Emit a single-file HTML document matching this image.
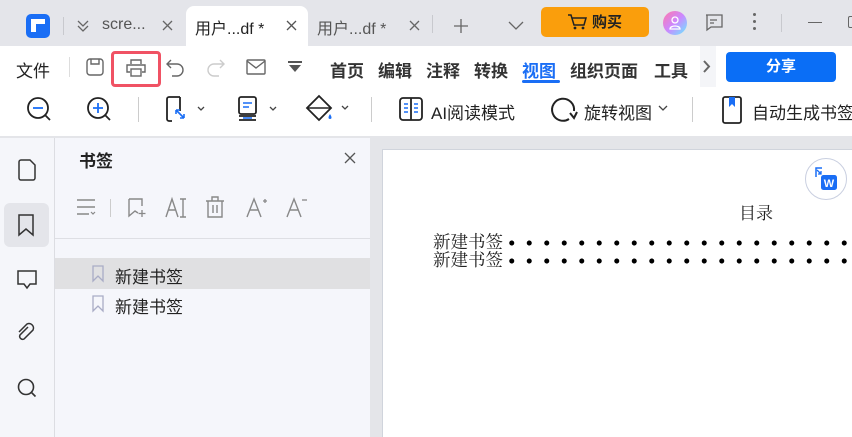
<!DOCTYPE html>
<html><head><meta charset="utf-8"><style>
*{margin:0;padding:0;box-sizing:border-box}
body{width:852px;height:437px;overflow:hidden;position:relative;background:#e4e5e9;font-family:"Liberation Sans","Noto Sans CJK SC",sans-serif;color:#222}
.a{position:absolute}
svg{position:absolute;overflow:visible}
.t{font-size:17px;color:#222;white-space:nowrap}
.b{font-weight:bold;font-size:17px;color:#333;white-space:nowrap}
</style></head><body>
<div class="a" style="left:0;top:0;width:852px;height:46px;background:#e4e5ea"></div>
<div class="a" style="left:26px;top:14px;width:24px;height:24px;background:#1a6ef5;border-radius:5px"></div>
<div class="a" style="left:31px;top:19px;width:14px;height:5px;background:#fff"></div>
<div class="a" style="left:31px;top:24px;width:5px;height:8px;background:#fff"></div>
<div class="a" style="left:63px;top:17px;width:1px;height:18px;background:#c8c9ce"></div>
<svg style="left:76px;top:19px" width="14" height="14"><path d="M2 2l5 5 5-5M2 7l5 5 5-5" fill="none" stroke="#666" stroke-width="1.3"/></svg>
<div class="a" style="left:102px;top:16px;font-size:16px;color:#555">scre...</div>
<svg style="left:162px;top:20px" width="11" height="11"><path d="M1 1l9 9M10 1l-9 9" stroke="#666" stroke-width="1.3"/></svg>
<div class="a" style="left:186px;top:6px;width:122px;height:40px;background:#fff;border-radius:8px 8px 0 0"></div>
<div class="a" style="left:195px;top:15px;font-size:16px;color:#222">用户...df *</div>
<svg style="left:286px;top:20px" width="11" height="11"><path d="M1 1l9 9M10 1l-9 9" stroke="#555" stroke-width="1.3"/></svg>
<div class="a" style="left:317px;top:15px;font-size:16px;color:#555">用户...df *</div>
<svg style="left:409px;top:20px" width="11" height="11"><path d="M1 1l9 9M10 1l-9 9" stroke="#666" stroke-width="1.3"/></svg>
<div class="a" style="left:432px;top:15px;width:1px;height:18px;background:#c8c9ce"></div>
<svg style="left:454px;top:19px" width="14" height="14"><path d="M7 0v14M0 7h14" stroke="#666" stroke-width="1.3"/></svg>
<svg style="left:508px;top:21px" width="16" height="10"><path d="M1 1l7 7 7-7" fill="none" stroke="#666" stroke-width="1.3"/></svg>
<div class="a" style="left:541px;top:7px;width:108px;height:30px;background:#fa9e0c;border-radius:5px"></div>
<svg style="left:567px;top:13px" width="22" height="18"><path d="M1 2h3l3 10h10l2-7H5" fill="none" stroke="#222" stroke-width="1.5"/><circle cx="8" cy="15" r="1.4" fill="#222"/><circle cx="16" cy="15" r="1.4" fill="#222"/></svg>
<div class="a" style="left:592px;top:11px;font-size:15px;font-weight:bold;color:#222">购买</div>
<div class="a" style="left:663px;top:11px;width:24px;height:24px;border-radius:50%;background:linear-gradient(135deg,#f7a 0%,#c8f 50%,#6ef 100%)"></div>
<svg style="left:669px;top:15px" width="12" height="15"><circle cx="6" cy="5" r="3" fill="none" stroke="#fff" stroke-width="1.3"/><path d="M1 14c0-4 10-4 10 0z" fill="none" stroke="#fff" stroke-width="1.3"/></svg>
<svg style="left:705px;top:14px" width="18" height="17"><path d="M1 1h16v12H6l-4 3V1z" fill="none" stroke="#666" stroke-width="1.3"/><path d="M5 6h7M5 9h4" stroke="#666" stroke-width="1.2"/></svg>
<div class="a" style="left:753px;top:13px;width:3px;height:3px;background:#666;border-radius:50%;box-shadow:0 7px 0 #666,0 14px 0 #666"></div>
<div class="a" style="left:781px;top:14px;width:1px;height:18px;background:#c8c9ce"></div>
<div class="a" style="left:808px;top:22px;width:14px;height:1.3px;background:#666"></div>
<div class="a" style="left:848px;top:16px;width:10px;height:12px;border:1.3px solid #666;border-radius:2px"></div>
<div class="a" style="left:0;top:46px;width:852px;height:90px;background:#fff"></div>
<div class="a t" style="left:16px;top:57px">文件</div>
<div class="a" style="left:69px;top:57px;width:1px;height:20px;background:#ddd"></div>
<svg style="left:86px;top:58px" width="18" height="18"><rect x="1" y="1" width="16" height="16" rx="3" fill="none" stroke="#666" stroke-width="1.4"/><path d="M5 1v5h8V1" fill="none" stroke="#666" stroke-width="1.4"/></svg>
<div class="a" style="left:111px;top:51px;width:50px;height:36px;border:3px solid #f05264;border-radius:4px"></div>
<svg style="left:126px;top:58px" width="20" height="20"><path d="M5 6V2h10v4M4 14H1V7h18v7h-3" fill="none" stroke="#666" stroke-width="1.4"/><rect x="5" y="11" width="10" height="7" fill="none" stroke="#666" stroke-width="1.4"/></svg>
<svg style="left:166px;top:58px" width="20" height="20"><path d="M5 2L1 6l4 4M1 6h10a6 6 0 0 1 0 12H6" fill="none" stroke="#666" stroke-width="1.4"/></svg>
<svg style="left:205px;top:58px" width="20" height="20"><path d="M15 2l4 4-4 4M19 6H9a6 6 0 0 0 0 12h5" fill="none" stroke="#ccc" stroke-width="1.4"/></svg>
<svg style="left:246px;top:59px" width="20" height="16"><rect x="1" y="1" width="18" height="14" rx="1" fill="none" stroke="#666" stroke-width="1.4"/><path d="M1 2l9 7 9-7" fill="none" stroke="#666" stroke-width="1.4"/></svg>
<svg style="left:287px;top:61px" width="16" height="12"><path d="M1 1h14" stroke="#555" stroke-width="2"/><path d="M2 4h12l-6 7z" fill="#555"/></svg>
<div class="a b" style="left:330px;top:57px">首页</div>
<div class="a b" style="left:378px;top:57px">编辑</div>
<div class="a b" style="left:426px;top:57px">注释</div>
<div class="a b" style="left:474px;top:57px">转换</div>
<div class="a b" style="left:522px;top:57px;color:#1a6ef5">视图</div>
<div class="a" style="left:522px;top:80px;width:38px;height:3px;background:#1a6ef5;border-radius:2px"></div>
<div class="a b" style="left:570px;top:57px">组织页面</div>
<div class="a b" style="left:654px;top:57px">工具</div>
<div class="a" style="left:700px;top:46px;width:16px;height:41px;background:#f4f5f8"></div>
<svg style="left:703px;top:60px" width="8" height="13"><path d="M1 1l5 5.5L1 12" fill="none" stroke="#666" stroke-width="2"/></svg>
<div class="a" style="left:726px;top:52px;width:110px;height:30px;background:#0a6ef6;border-radius:4px;color:#fff;font-size:15px;font-weight:bold;text-align:center;line-height:30px">分享</div>
<svg style="left:26px;top:96px" width="28" height="28"><circle cx="12" cy="12" r="10" fill="none" stroke="#222" stroke-width="1.8"/><path d="M7 12h10" stroke="#1a6ef5" stroke-width="1.8"/><path d="M19 19l5 5" stroke="#222" stroke-width="1.8"/></svg>
<svg style="left:86px;top:96px" width="28" height="28"><circle cx="12" cy="12" r="10" fill="none" stroke="#222" stroke-width="1.8"/><path d="M7 12h10M12 7v10" stroke="#1a6ef5" stroke-width="1.8"/><path d="M19 19l5 5" stroke="#222" stroke-width="1.8"/></svg>
<div class="a" style="left:138px;top:97px;width:1px;height:25px;background:#ccc"></div>
<svg style="left:166px;top:96px" width="40" height="27"><path d="M14 1H3a2 2 0 0 0-2 2v20a2 2 0 0 0 2 2h3M14 1v14" fill="none" stroke="#222" stroke-width="1.8"/><path d="M10 14l8 8M10 14v4M10 14h4M18 22h-4M18 22v-4" fill="none" stroke="#1a6ef5" stroke-width="1.6"/><path d="M32 11l3 3 3-3" fill="none" stroke="#444" stroke-width="1.3"/></svg>
<svg style="left:238px;top:96px" width="40" height="28"><rect x="1" y="1" width="17" height="17" rx="2" fill="none" stroke="#222" stroke-width="1.8"/><path d="M5 7h9M5 11h6" stroke="#1a6ef5" stroke-width="1.6"/><path d="M1 20h17M1 24h17" stroke="#222" stroke-width="1.8"/><path d="M5 22h9" stroke="#1a6ef5" stroke-width="1.6"/><path d="M32 11l3 3 3-3" fill="none" stroke="#444" stroke-width="1.3"/></svg>
<svg style="left:306px;top:95px" width="44" height="28"><path d="M13 1l12 12-12 12L1 13z" fill="none" stroke="#222" stroke-width="1.8"/><path d="M1 13h24" stroke="#222" stroke-width="1.6"/><path d="M24 19c-2 3-2 5 0 5s2-2 0-5z" fill="#1a6ef5"/><path d="M36 11l3 3 3-3" fill="none" stroke="#444" stroke-width="1.3"/></svg>
<div class="a" style="left:371px;top:97px;width:1px;height:25px;background:#ccc"></div>
<svg style="left:399px;top:97px" width="24" height="24"><rect x="1" y="1" width="22" height="22" rx="3" fill="none" stroke="#222" stroke-width="1.8"/><path d="M12 1v22" stroke="#222" stroke-width="1.8"/><path d="M5 7h4M5 11h4M5 15h4M15 7h4M15 11h4M15 15h4" stroke="#1a6ef5" stroke-width="1.5"/></svg>
<div class="a t" style="left:431px;top:99px">AI阅读模式</div>
<svg style="left:551px;top:97px" width="26" height="26"><path d="M18 22A11 11 0 1 1 23 14" fill="none" stroke="#222" stroke-width="2"/><path d="M19 16l4 5 3-6" fill="none" stroke="#222" stroke-width="2"/></svg>
<div class="a t" style="left:584px;top:99px">旋转视图</div>
<svg style="left:658px;top:105px" width="10" height="7"><path d="M1 1l4 4 4-4" fill="none" stroke="#444" stroke-width="1.3"/></svg>
<div class="a" style="left:692px;top:97px;width:1px;height:25px;background:#ccc"></div>
<svg style="left:722px;top:96px" width="20" height="28"><rect x="1" y="1" width="18" height="26" rx="2" fill="none" stroke="#222" stroke-width="1.8"/><path d="M7 1v10l3-3 3 3V1z" fill="#1a6ef5"/></svg>
<div class="a t" style="left:752px;top:99px">自动生成书签</div>
<div class="a" style="left:0;top:138px;width:54px;height:299px;background:#f5f6fa"></div>
<div class="a" style="left:54px;top:138px;width:1px;height:299px;background:#dcdde2"></div>
<svg style="left:18px;top:159px" width="18" height="22"><path d="M1 3a2 2 0 0 1 2-2h9l5 5v13a2 2 0 0 1-2 2H3a2 2 0 0 1-2-2z" fill="none" stroke="#333" stroke-width="1.5"/></svg>
<div class="a" style="left:4px;top:203px;width:45px;height:44px;background:#e4e5ea;border-radius:6px"></div>
<svg style="left:18px;top:214px" width="16" height="22"><path d="M1 1h14v20l-7-6-7 6z" fill="none" stroke="#333" stroke-width="1.5"/></svg>
<svg style="left:17px;top:270px" width="20" height="20"><path d="M1 1h18v13h-6l-3 4-3-4H1z" fill="none" stroke="#333" stroke-width="1.5"/></svg>
<svg style="left:16px;top:323px" width="20" height="20"><path d="M12 4l-8 8a3 3 0 0 0 4 4l9-9a4.5 4.5 0 0 0-6-6L3 9" fill="none" stroke="#333" stroke-width="1.5"/></svg>
<svg style="left:17px;top:378px" width="20" height="20"><circle cx="9" cy="9" r="7.5" fill="none" stroke="#333" stroke-width="1.6"/><path d="M14.5 14.5l4 4" stroke="#333" stroke-width="1.6"/></svg>
<div class="a" style="left:55px;top:138px;width:315px;height:299px;background:#f5f6fb"></div>
<div class="a" style="left:79px;top:147px;font-size:17px;font-weight:bold;color:#222">书签</div>
<svg style="left:344px;top:152px" width="12" height="12"><path d="M1 1l10 10M11 1L1 11" stroke="#555" stroke-width="1.3"/></svg>
<svg style="left:76px;top:197px" width="22" height="20"><path d="M1 3h18M1 10h18M1 17h12" stroke="#888" stroke-width="1.4"/><path d="M15 15l2 2 2-2" fill="none" stroke="#888" stroke-width="1.2"/></svg>
<div class="a" style="left:110px;top:199px;width:1px;height:18px;background:#ccc"></div>
<svg style="left:128px;top:198px" width="20" height="20"><path d="M1 1h13v7M1 1v17l6-5 3 2" fill="none" stroke="#888" stroke-width="1.4"/><path d="M14 12v7M10.5 15.5h7" stroke="#888" stroke-width="1.3"/></svg>
<svg style="left:165px;top:197px" width="22" height="22"><path d="M1 20L7 2l6 18M3.5 13h7" fill="none" stroke="#888" stroke-width="1.4"/><path d="M15 2h6M18 2v18M15 20h6" stroke="#888" stroke-width="1.4"/></svg>
<svg style="left:205px;top:196px" width="20" height="22"><path d="M1 5h18M7 5V1h6v4M3 5v16h14V5M8 9v8M12 9v8" fill="none" stroke="#888" stroke-width="1.4"/></svg>
<svg style="left:246px;top:196px" width="22" height="22"><path d="M1 21L8 3l7 18M4 14h8" fill="none" stroke="#888" stroke-width="1.4"/><path d="M17 5h4M19 3v4" stroke="#888" stroke-width="1.3"/></svg>
<svg style="left:286px;top:196px" width="22" height="22"><path d="M1 21L8 3l7 18M4 14h8" fill="none" stroke="#888" stroke-width="1.4"/><path d="M16 4h5" stroke="#888" stroke-width="1.3"/></svg>
<div class="a" style="left:55px;top:238px;width:315px;height:1px;background:#dedfe4"></div>
<div class="a" style="left:55px;top:258px;width:315px;height:31px;background:#e0e0e2"></div>
<svg style="left:92px;top:265px" width="12" height="17"><path d="M1 1h10v15l-5-5-5 5z" fill="none" stroke="#a9acc6" stroke-width="1.3"/></svg>
<div class="a t" style="left:115px;top:263px">新建书签</div>
<svg style="left:92px;top:295px" width="12" height="17"><path d="M1 1h10v15l-5-5-5 5z" fill="none" stroke="#a9acc6" stroke-width="1.3"/></svg>
<div class="a t" style="left:115px;top:293px">新建书签</div>
<div class="a" style="left:370px;top:138px;width:482px;height:299px;background:#e4e5e9"></div>
<div class="a" style="left:382px;top:149px;width:470px;height:288px;background:#fff;border-left:1px solid #d0d4dc;border-top:1px solid #d0d4dc"></div>
<div class="a" style="left:805px;top:158px;width:42px;height:42px;border-radius:50%;border:1px solid #c9cfe0;background:#fff"></div>
<svg style="left:813px;top:166px" width="26" height="26"><path d="M9 2H3v9" fill="none" stroke="#1a6ef5" stroke-width="1.5"/><path d="M4 4l4 4M8 5v3H5" fill="none" stroke="#1a6ef5" stroke-width="1.3"/><rect x="8" y="9" width="16" height="15" rx="2.5" fill="#1a6ef5"/><text x="16" y="21" font-size="11" font-weight="bold" fill="#fff" text-anchor="middle" font-family="Liberation Sans">W</text></svg>
<div class="a" style="left:739px;top:199px;font-size:17px;font-family:'Liberation Serif','Noto Serif CJK SC',serif;color:#222">目录</div>
<div class="a" style="left:433px;top:233px;font-size:17.5px;line-height:18px;font-family:'Liberation Serif','Noto Serif CJK SC',serif;color:#222">新建书签<br>新建书签</div>
<div class="a" style="left:503px;top:234px;width:349px;height:36px;background-image:radial-gradient(circle,#000 2.3px,transparent 2.7px);background-size:17.5px 18px;background-position:0 0"></div>
</body></html>
